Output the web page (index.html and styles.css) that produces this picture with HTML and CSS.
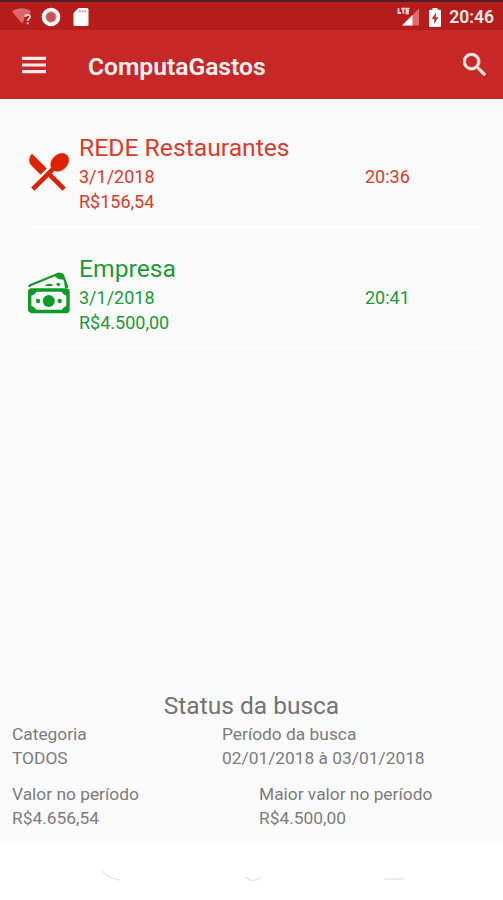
FILE: index.html
```html
<!DOCTYPE html>
<html lang="pt-BR">
<head>
    <meta charset="UTF-8">
    <meta name="viewport" content="width=device-width, initial-scale=1.0">
    <title>ComputaGastos</title>
    <link rel="stylesheet" href="styles.css">
</head>
<body>
    <div class="status-bar">
        <div class="status-left">
            <svg class="wifi-icon" viewBox="0 0 20 18">
                <path d="M0 3.500C5-.8 14-.8 19 3.500L17.500 6c-4-1-6 2-5 6L10 15.500z" fill="#d9686a"/>
                <path d="M13.300 9c.1-3 4.700-3 4.700-.2 0 2-2.300 2-2.300 4.200M15.700 14.300v2" fill="none" stroke="#f3cfcf" stroke-width="1.900"/>
            </svg>
            <svg class="record-icon" viewBox="0 0 20 20">
                <circle cx="10" cy="10" r="7.500" fill="#d98a8a" stroke="#fff" stroke-width="3.600"/>
                <circle cx="10" cy="10" r="4.500" fill="#c45353"/>
            </svg>
            <svg class="sd-icon" viewBox="0 0 16 20">
                <path d="M5.500 1H14q1.500 0 1.500 1.500v15Q15.500 19 14 19H2Q.5 19 .5 17.500V6z" fill="#fff"/>
                <path d="M6 4.300h7.500" stroke="#d99" stroke-width="2" stroke-dasharray="1.700 1"/>
            </svg>
        </div>
        <div class="status-right">
            <svg class="signal-icon" viewBox="0 0 24 20">
                <path d="M5 18.500L22 1.500v17z" fill="#dc6b6c"/>
                <path d="M5 18.500L15.500 8v10.500z" fill="#fff"/>
                <path d="M1.500 1v5h2.500M4.300 1.700h4M6.300 1.700v5M12.500 1.700H9.500v4.600h2.500M9.500 4H12" fill="none" stroke="#f8dada" stroke-width="1.800"/>
            </svg>
            <svg class="battery-icon" viewBox="0 0 12 19">
                <path d="M3.500 0h5v1.800H11q1 0 1 1V18q0 1-1 1H1q-1 0-1-1V2.800q0-1 1-1h2.500z" fill="#fff"/>
                <path d="M7 4.500L2.800 11h2.500v5l4-6.800H6.800z" fill="#a93232"/>
            </svg>
            <span class="clock">20:46</span>
        </div>
    </div>

    <header class="toolbar">
        <svg class="menu-icon" viewBox="0 0 24 18">
            <path d="M0 2.300h24M0 9h24M0 15.700h24" stroke="#fde9e7" stroke-width="3.200"/>
        </svg>
        <h1 class="app-title">ComputaGastos</h1>
        <svg class="search-icon" viewBox="3 3 17.500 17.500">
            <path d="M15.500 14h-.79l-.28-.27C15.410 12.590 16 11.110 16 9.500 16 5.910 13.090 3 9.500 3S3 5.910 3 9.500 5.910 16 9.500 16c1.610 0 3.090-.59 4.230-1.570l.27.28v.79l5 4.990L20.490 19l-4.990-5zm-6 0C7.010 14 5 11.990 5 9.500S7.010 5 9.500 5 14 7.010 14 9.500 11.990 14 9.500 14z" fill="#fde9e7" stroke="#fde9e7" stroke-width=".4"/>
        </svg>
    </header>

    <main class="list">
        <div class="item expense">
            <svg class="item-icon" viewBox="0 0 24 24">
                <path d="M8.100 13.340l2.830-2.830L3.910 3.500c-1.560 1.560-1.560 4.090 0 5.660l4.190 4.180zm6.780-1.810c1.530.71 3.680.21 5.270-1.380 1.910-1.910 2.280-4.650.81-6.120-1.460-1.460-4.200-1.100-6.120.81-1.590 1.590-2.090 3.740-1.380 5.270L3.700 19.870l1.410 1.410L12 14.410l6.880 6.880 1.410-1.410L13.410 13l1.470-1.470z" fill="currentColor" stroke="currentColor" stroke-width=".35" stroke-linejoin="round"/>
            </svg>
            <div class="item-body">
                <div class="item-name">REDE Restaurantes</div>
                <div class="item-row">
                    <span class="item-date">3/1/2018</span>
                    <span class="item-time">20:36</span>
                </div>
                <div class="item-value">R$156,54</div>
            </div>
        </div>
        <div class="item income">
            <svg class="item-icon" viewBox="0 0 49 49">
                <g fill="none" stroke="currentColor" stroke-linejoin="round">
                    <rect x="5.700" y="22" width="38.300" height="21.500" rx="2" stroke-width="3.400"/>
                    <path d="M5.500 19v-1.500L35 5.500l3.500 1 5 13" stroke-width="2.200"/>
                </g>
                <g fill="currentColor">
                    <path d="M6 22h7q-1 5-7 6zM44 22h-7q1 5 7 6zM6 43.500V38q5 0 7 5.500zM44 43.500V38q-5 0-7 5.500z"/>
                    <path d="M30 7.500l5-2.500 3.500 1 2 5.500q-6 .5-8-2zM40 14l4 6h-3z"/>
                    <circle cx="24.800" cy="33" r="6"/>
                    <circle cx="14" cy="33" r="2.200"/>
                    <circle cx="35.700" cy="33" r="2.200"/>
                    <path d="M20.500 18q3-3 7-2l1.500 2zM32 16.500l2-2 2.500 1.500-1.500 2.500z"/>
                </g>
            </svg>
            <div class="item-body">
                <div class="item-name">Empresa</div>
                <div class="item-row">
                    <span class="item-date">3/1/2018</span>
                    <span class="item-time">20:41</span>
                </div>
                <div class="item-value">R$4.500,00</div>
            </div>
        </div>
    </main>

    <section class="summary">
        <h2 class="summary-title">Status da busca</h2>
        <div class="summary-row period">
            <div class="summary-cell">
                <div>Categoria</div>
                <div>TODOS</div>
            </div>
            <div class="summary-cell">
                <div>Período da busca</div>
                <div>02/01/2018 à 03/01/2018</div>
            </div>
        </div>
        <div class="summary-row values">
            <div class="summary-cell">
                <div>Valor no período</div>
                <div>R$4.656,54</div>
            </div>
            <div class="summary-cell">
                <div>Maior valor no período</div>
                <div>R$4.500,00</div>
            </div>
        </div>
    </section>

    <nav class="nav-bar">
        <svg class="nav-back" viewBox="0 0 20 13">
            <path d="M1 2q8 8 18 9" fill="none" stroke="#e6e6e6" stroke-width="1.300"/>
        </svg>
        <svg class="nav-home" viewBox="0 0 18 8">
            <path d="M1 3q8 7 16 0" fill="none" stroke="#e6e6e6" stroke-width="1.300"/>
        </svg>
        <svg class="nav-recent" viewBox="0 0 20 4">
            <path d="M.5 1h19" stroke="#e6e6e6" stroke-width="1.500"/>
        </svg>
    </nav>
</body>
</html>
```
FILE: styles.css
```css
* {
    margin: 0;
    padding: 0;
    box-sizing: border-box;
}

body {
    width: 503px;
    height: 900px;
    display: flex;
    flex-direction: column;
    overflow: hidden;
    background-color: #fafafa;
    font-family: Roboto, sans-serif;
    font-size: 18px;
}

svg {
    display: block;
    flex: none;
}

/* Status bar */
.status-bar {
    height: 30px;
    display: flex;
    justify-content: space-between;
    align-items: center;
    padding: 2px 9px 0 12px;
    border-top: 2px solid #4c2024;
    background-color: #b71c1c;
}

.status-left,
.status-right {
    display: flex;
    align-items: center;
}

.wifi-icon {
    width: 20px;
    height: 18px;
    margin-right: 9px;
}

.record-icon {
    width: 20px;
    height: 20px;
    margin-right: 12px;
}

.sd-icon {
    width: 16px;
    height: 20px;
}

.signal-icon {
    width: 24px;
    height: 20px;
    margin-right: 8px;
}

.battery-icon {
    width: 12px;
    height: 19px;
    margin-right: 8px;
}

.clock {
    color: #ffeceb;
    font-size: 17.5px;
    font-weight: 600;
    line-height: 20px;
}

/* Toolbar */
.toolbar {
    height: 69px;
    display: flex;
    align-items: center;
    padding: 0 17px 0 22px;
    background-color: #c62828;
}

.menu-icon {
    width: 24px;
    height: 18px;
    margin-right: 42px;
}

.app-title {
    flex: 1;
    padding-top: 4px;
    color: #fff3f2;
    font-size: 24.6px;
    font-weight: 600;
    line-height: 30px;
}

.search-icon {
    width: 23px;
    height: 23px;
}

/* List */
.list {
    flex: 1;
    padding: 8px 24px 0;
}

.item {
    height: 121px;
    display: flex;
    padding-top: 25px;
}

.item:after {
    content: "";
    align-self: flex-end;
    width: 447px;
    height: 2px;
    margin-left: -447px;
    background-color: #fefefe;
}

.expense {
    color: #dc3a28;
}

.income {
    color: #209a38;
}

.item-icon {
    width: 49px;
    height: 49px;
    margin-top: 15px;
    margin-right: 6px;
}

.expense .item-icon {
    color: #de2100;
}

.income .item-icon {
    color: #0d9b26;
}

.item-body {
    flex: none;
    width: 400px;
}

.item-name {
    font-size: 24.7px;
    line-height: 32px;
}

.item-row {
    display: flex;
    line-height: 25px;
}

.item-date {
    width: 286px;
}

.item-value {
    line-height: 25px;
}

/* Search summary */
.summary {
    height: 152px;
    padding: 0 12px;
    color: #7c7c7c;
    font-size: 17.35px;
}

.summary-title {
    color: #737373;
    font-size: 24.5px;
    font-weight: 400;
    line-height: 33px;
    text-align: center;
}

.summary-row {
    display: grid;
    line-height: 24px;
}

.period {
    grid-template-columns: 210px 1fr;
    margin-bottom: 12px;
}

.values {
    grid-template-columns: 247px 1fr;
}

/* Navigation buttons */
.nav-bar {
    height: 59px;
    display: flex;
    align-items: flex-end;
    padding: 0 0 18px 101px;
    background-color: #fff;
}

.nav-back {
    width: 20px;
    height: 13px;
    margin-right: 123px;
}

.nav-home {
    width: 18px;
    height: 8px;
    margin-right: 122px;
}

.nav-recent {
    width: 20px;
    height: 4px;
}
```
